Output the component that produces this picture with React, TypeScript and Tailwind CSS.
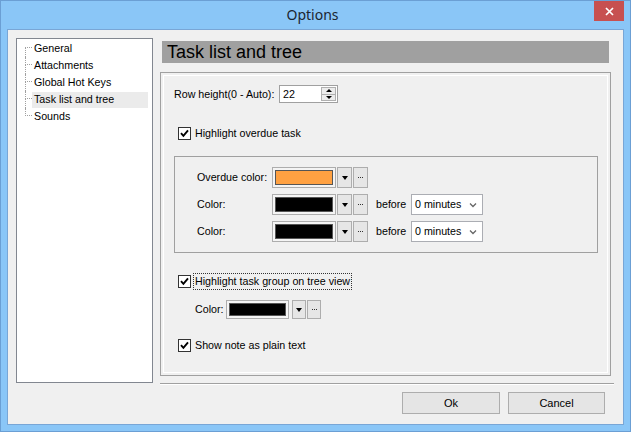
import * as React from "react";

function Check() {
  return (
    <span className="flex h-[13px] w-[13px] shrink-0 items-center justify-center border border-[#333] bg-white">
      <svg width="9" height="9" viewBox="0 0 9 9">
        <path d="M1 4.2 L3.4 6.8 L8 1.4" stroke="#000" strokeWidth="1.9" fill="none" />
      </svg>
    </span>
  );
}

function DownArrow() {
  return <span className="h-0 w-0 border-x-[3.5px] border-t-[4px] border-x-transparent border-t-black" />;
}

function ColorPicker({
  color,
  frame,
  btn,
  gapClass,
}: {
  color: string;
  frame: string;
  btn: string;
  gapClass: string;
}) {
  return (
    <div className={"flex " + gapClass}>
      <div className={"border border-[#adadad] bg-[#f4f4f4] p-[2px] " + frame}>
        <div className={"h-full w-full border border-[#555] " + color} />
      </div>
      <div className="flex gap-px">
        <div className={"flex items-center justify-center border border-[#adadad] bg-[#e6e6e6] " + btn}>
          <DownArrow />
        </div>
        <div className={"flex items-center justify-center gap-px border border-[#adadad] bg-[#e6e6e6] " + btn}>
          <span className="h-px w-px bg-[#333]" />
          <span className="h-px w-px bg-[#333]" />
          <span className="h-px w-px bg-[#333]" />
        </div>
      </div>
    </div>
  );
}

function MinutesSelect() {
  return (
    <div className="flex h-[21px] w-[72px] items-center justify-between border border-[#abadb3] bg-white pl-[3px] pr-[5px]">
      <span>0 minutes</span>
      <svg width="8" height="6" viewBox="0 0 8 6">
        <path d="M1 1.5 L4 4.5 L7 1.5" stroke="#666" strokeWidth="1.3" fill="none" />
      </svg>
    </div>
  );
}

const treeItems = ["General", "Attachments", "Global Hot Keys", "Task list and tree", "Sounds"];

export default function App() {
  return (
    <div className="flex h-[432px] w-[631px] flex-col overflow-hidden border border-[#6b9fd4] bg-[#8ac6f7] font-['Liberation_Sans',Arial,sans-serif] text-[10.7px] text-black">
      {/* title bar */}
      <div className="flex h-[28px] items-start">
        <div className="flex-1" />
        <span className="mt-[5px] font-['Noto_Sans',sans-serif] text-[14px] leading-[18px] text-[#1b2530]">Options</span>
        <div className="flex flex-1 justify-end pr-[6px]">
          <div className="flex h-[20px] w-[30px] items-center justify-center bg-[#c75050]">
            <svg width="9" height="9" viewBox="0 0 9 9">
              <path d="M1 1 L8 8 M8 1 L1 8" stroke="#fff" strokeWidth="1.7" />
            </svg>
          </div>
        </div>
      </div>

      {/* client area */}
      <div className="mx-[6px] flex h-[396px] flex-col border border-[#79a6d6] bg-[#f0f0f0] pl-[8px] pt-[8px]">
        <div className="flex gap-[7px]">
          {/* tree */}
          <div className="h-[345px] w-[137px] border border-[#828790] bg-white pt-px">
            {treeItems.map((item, i) => (
              <div key={item} className="flex h-[17px] items-center">
                <div className="ml-[8px] flex h-full w-[7px] flex-col">
                  <div
                    className={
                      "h-[8px] border-b border-dotted border-[#a0a0a0] " +
                      (i > 0 ? "border-l" : "")
                    }
                  />
                  <div className={"flex-1 border-dotted border-[#a0a0a0] " + (i < treeItems.length - 1 ? "border-l" : "")} />
                </div>
                <span
                  className={
                    "mr-[4px] flex h-[16px] flex-1 items-center pl-[2px] " +
                    (item === "Task list and tree" ? "bg-[#ebebeb]" : "")
                  }
                >
                  {item}
                </span>
              </div>
            ))}
          </div>

          {/* right column */}
          <div className="flex w-[454px] flex-col">
            <div className="ml-[2px] mt-[3px] h-[22px] w-[447px] bg-[#a0a0a0] pl-[5px] text-[18px] leading-[22px]">
              Task list and tree
            </div>

            <div className="mt-[9px] flex h-[304px] w-[451px] flex-col border border-[#a0a0a0] pl-[13px] shadow-[inset_0_0_0_2px_#f0f0f0,inset_0_0_0_3px_#fff]">
              <div className="mt-[12px] flex h-[18px] items-center">
                <span className="w-[105px]">Row height(0 - Auto):</span>
                <div className="flex h-[18px] w-[59px] border border-[#a0a0a0] bg-white">
                  <span className="flex-1 pl-[3px] leading-[16px]">22</span>
                  <div className="my-px mr-px flex w-[15px] flex-col">
                    <div className="flex flex-1 items-center justify-center border border-[#b0b0b0] bg-[#ececec]">
                      <span className="h-0 w-0 border-x-[3px] border-b-[3px] border-x-transparent border-b-black" />
                    </div>
                    <div className="flex flex-1 items-center justify-center border border-t-0 border-[#b0b0b0] bg-[#ececec]">
                      <span className="h-0 w-0 border-x-[3px] border-t-[3px] border-x-transparent border-t-black" />
                    </div>
                  </div>
                </div>
              </div>

              <div className="ml-[4px] mt-[24px] flex h-[13px] items-center gap-[4px]">
                <Check />
                <span>Highlight overdue task</span>
              </div>

              <div className="mt-[16px] flex h-[97px] w-[424px] flex-col gap-[6px] border border-[#a0a0a0] pl-[22px] pt-[10px]">
                <div className="flex h-[21px] items-center">
                  <span className="w-[75px]">Overdue color:</span>
                  <ColorPicker color="bg-[#ffa142]" frame="h-[21px] w-[64px]" btn="h-[21px] w-[15px]" gapClass="gap-px" />
                </div>
                {[0, 1].map((k) => (
                  <div key={k} className="flex h-[21px] items-center">
                    <span className="w-[75px]">Color:</span>
                    <ColorPicker color="bg-black" frame="h-[21px] w-[64px]" btn="h-[21px] w-[15px]" gapClass="gap-px" />
                    <span className="ml-[8px] w-[35px]">before</span>
                    <MinutesSelect />
                  </div>
                ))}
              </div>

              <div className="ml-[4px] mt-[22px] flex h-[13px] items-center gap-[2px]">
                <Check />
                <span className="border border-dotted border-[#333] px-px leading-[15px]">
                  Highlight task group on tree view
                </span>
              </div>

              <div className="ml-[21px] mt-[12px] flex h-[19px] items-center">
                <span className="w-[31px]">Color:</span>
                <ColorPicker color="bg-black" frame="h-[19px] w-[63px]" btn="h-[19px] w-[14px]" gapClass="gap-[3px]" />
              </div>

              <div className="ml-[4px] mt-[20px] flex h-[13px] items-center gap-[4px]">
                <Check />
                <span>Show note as plain text</span>
              </div>
            </div>

            <div className="mt-[7px] h-[2px] w-[454px] border-t border-b border-t-[#a0a0a0] border-b-white" />
          </div>
        </div>

        <div className="mt-[7px] flex justify-end gap-[8px] pr-[18px]">
          <button className="h-[22px] w-[98px] border border-[#adadad] bg-[#e5e5e5] text-[11px]">Ok</button>
          <button className="h-[22px] w-[97px] border border-[#adadad] bg-[#e5e5e5] text-[11px]">Cancel</button>
        </div>
      </div>
    </div>
  );
}
